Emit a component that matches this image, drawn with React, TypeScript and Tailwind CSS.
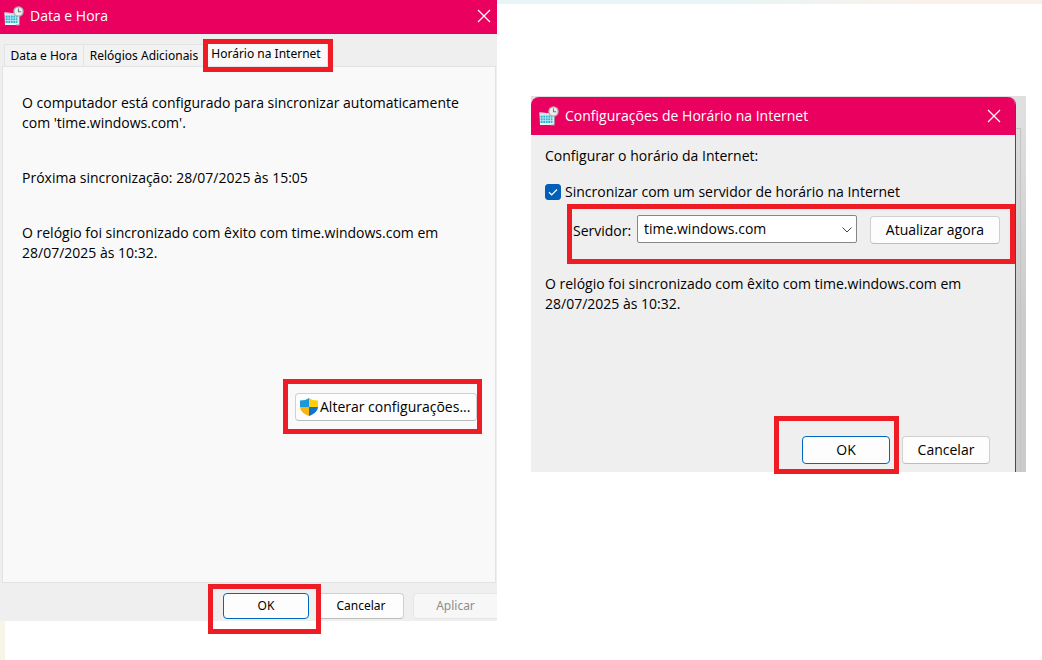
import clsx from 'clsx'

const BUTTON = 'rounded border border-[#d0d0d0] border-b-[#bcbcbc] bg-[#fdfdfd] text-black'
const BUTTON_PRIMARY = 'rounded border border-[#0067c0] bg-[#fdfdfd] text-black'

function CalendarClockIcon() {
  return (
    <svg width="20" height="20" viewBox="0 0 20 20" className="shrink-0" aria-hidden="true">
      <path d="M.5 6.500L15 7.500V19H1z" fill="#eefafd" />
      <path d="M.5 6.500L15 7.500V9L.5 8.500z" fill="#c4dfe8" />
      <path d="M1.500 9.500h12V17h-12z" fill="#2fb4d2" />
      <path d="M4 9v8.500M6.500 9v8.500M9 9v8.500M11.500 9v8.500" stroke="#c9eff6" strokeWidth=".7" />
      <path d="M1 12h13M1 14.500h13" stroke="#c9eff6" strokeWidth=".7" />
      <path d="M15.300 9v10H12" stroke="#a89a9f" strokeWidth="1" fill="none" />
      <circle cx="14.500" cy="5.500" r="4.600" fill="#eceeee" stroke="#a9b0b2" strokeWidth="1.300" />
      <path d="M14.500 2.500v3.300h2.700" stroke="#73787a" strokeWidth="1.100" fill="none" />
    </svg>
  )
}

function CloseIcon() {
  return (
    <svg width="14" height="14" viewBox="0 0 14 14" aria-hidden="true">
      <path d="M1 1l12 12M13 1L1 13" stroke="#fff" strokeWidth="1.200" fill="none" />
    </svg>
  )
}

function ShieldIcon() {
  return (
    <svg width="20" height="20" viewBox="0 0 20 20" className="shrink-0" aria-hidden="true">
      <path d="M10 1C8 2.700 4.800 3.500 1 3.500V10h9z" fill="#1a98dc" />
      <path d="M10 1c2 1.700 5.200 2.500 9 2.500V10h-9z" fill="#ffcf0a" />
      <path d="M1 10h9v9C4.500 16.800 1.300 14 1 10z" fill="#f9b50b" />
      <path d="M19 10h-9v9c5.500-2.200 8.700-5 9-9z" fill="#0c74cc" />
    </svg>
  )
}

// red frame drawn over the control it wraps
function Marker({ className }: { className: string }) {
  return <span className={clsx('pointer-events-none absolute z-10 border-5 border-[#ee1c25]', className)} />
}

function TitleBar({ title, className }: { title: string; className: string }) {
  return (
    <header className={clsx('flex items-center bg-[#ea005e] text-white', className)}>
      <CalendarClockIcon />
      <h2 className="ml-1.5 flex-1 whitespace-nowrap">{title}</h2>
      <button type="button" aria-label="Fechar">
        <CloseIcon />
      </button>
    </header>
  )
}

function DateTimeWindow() {
  return (
    <section className="bg-[#efefef]">
      <TitleBar title="Data e Hora" className="h-[34px] pb-0.5 pl-1 pr-1.5" />

      <div
        role="tablist"
        className="flex h-8 items-end pl-1 font-['Noto_Sans',sans-serif] text-xs whitespace-nowrap"
      >
        <button
          type="button"
          role="tab"
          aria-selected="false"
          className="h-[22px] w-20 border border-b-0 border-[#e3e3e3] bg-[#f2f2f2]"
        >
          Data e Hora
        </button>
        <button
          type="button"
          role="tab"
          aria-selected="false"
          className="h-[22px] w-[120px] border border-x-0 border-b-0 border-[#e3e3e3] bg-[#f2f2f2]"
        >
          Relógios Adicionais
        </button>
        <div className="relative">
          <button
            type="button"
            role="tab"
            aria-selected="true"
            className="h-6 w-[124px] border border-b-0 border-[#e3e3e3] bg-[#f9f9f9] pb-0.5"
          >
            Horário na Internet
          </button>
          <Marker className="-bottom-1.5 -left-px h-[33px] w-[130px]" />
        </div>
      </div>

      <div
        role="tabpanel"
        className="ml-0.5 mr-px flex h-[517px] flex-col items-start border border-[#e3e3e3] bg-[#f9f9f9] pl-[19px] pr-[18px] pt-[26px]"
      >
        <div className="space-y-[35px] whitespace-nowrap">
          <p>
            O computador está configurado para sincronizar automaticamente
            <br />
            com 'time.windows.com'.
          </p>
          <p>Próxima sincronização: 28/07/2025 às 15:05</p>
          <p>
            O relógio foi sincronizado com êxito com time.windows.com em
            <br />
            28/07/2025 às 10:32.
          </p>
        </div>
        <div className="relative mt-[130px] self-end">
          <button
            type="button"
            className={clsx(BUTTON, 'flex h-7 w-[182px] items-center pl-[3px] whitespace-nowrap')}
          >
            <ShieldIcon />
            <span className="ml-px">Alterar configurações...</span>
          </button>
          <Marker className="-left-3 -top-3.5 h-[55px] w-[199px]" />
        </div>
      </div>

      <footer className="flex h-[38px] justify-end gap-[9px] overflow-x-clip pt-2.5 font-['Noto_Sans',sans-serif] text-xs">
        <div className="relative">
          <button type="button" className={clsx(BUTTON_PRIMARY, 'h-[26px] w-[86px]')}>
            OK
          </button>
          <Marker className="-left-[15px] -top-[9px] h-[50px] w-[113px]" />
        </div>
        <button type="button" className={clsx(BUTTON, 'h-[26px] w-[86px]')}>
          Cancelar
        </button>
        <button
          type="button"
          disabled
          className="h-[26px] w-[84px] rounded-l border border-r-0 border-[#e6e6e6] bg-[#f7f7f7] text-[#8d8d8d]"
        >
          Aplicar
        </button>
      </footer>
    </section>
  )
}

function InternetTimeDialog() {
  return (
    <section className="flex bg-linear-to-b from-[#e0e0e0] to-[#cbcbcb] to-60% pt-px">
      <div className="flex-1 overflow-hidden rounded-t-lg border-r border-[#d80058] bg-[#efefef]">
        <TitleBar title="Configurações de Horário na Internet" className="h-[38px] pl-2 pr-3.5" />

        <div className="pl-3.5 pt-[11px]">
          <p>Configurar o horário da Internet:</p>

          <div className="mt-4 flex items-center gap-1">
            <div className="relative size-4">
              <input
                id="sync"
                type="checkbox"
                defaultChecked
                className="peer block size-4 appearance-none rounded-[3px] border border-[#868686] checked:border-[#005fb8] checked:bg-[#005fb8]"
              />
              <svg
                viewBox="0 0 16 16"
                className="pointer-events-none absolute inset-0 hidden peer-checked:block"
                aria-hidden="true"
              >
                <path d="M4 8.200l2.700 2.600L12 5.500" stroke="#fff" strokeWidth="1.200" fill="none" />
              </svg>
            </div>
            <label htmlFor="sync" className="whitespace-nowrap">
              Sincronizar com um servidor de horário na Internet
            </label>
          </div>

          <div className="relative mt-3 flex items-center pl-7 pr-[15px]">
            <label htmlFor="server" className="w-16 pt-1 whitespace-nowrap">
              Servidor:
            </label>
            <div className="relative flex-1">
              <select
                id="server"
                className="block h-7 w-full appearance-none rounded-xs border border-[#868686] bg-white pl-1.5"
              >
                <option>time.windows.com</option>
              </select>
              <svg
                width="10"
                height="6"
                viewBox="0 0 10 6"
                className="pointer-events-none absolute right-[5px] top-3"
                aria-hidden="true"
              >
                <path d="M.5.5L5 5 9.500.5" stroke="#444" strokeWidth="1" fill="none" />
              </svg>
            </div>
            <button type="button" className={clsx(BUTTON, 'ml-[13px] mt-0.5 h-7 w-[130px] whitespace-nowrap')}>
              Atualizar agora
            </button>
            <Marker className="-top-2.5 left-[22px] right-0 h-[60px]" />
          </div>

          <p className="mt-[30px] whitespace-nowrap">
            O relógio foi sincronizado com êxito com time.windows.com em
            <br />
            28/07/2025 às 10:32.
          </p>

          <div className="mt-[122px] flex justify-end gap-3 pb-2 pr-[25px]">
            <button type="button" className={clsx(BUTTON_PRIMARY, 'h-7 w-[88px]')}>
              OK
            </button>
            <button type="button" className={clsx(BUTTON, 'h-7 w-[88px]')}>
              Cancelar
            </button>
          </div>
        </div>
      </div>
      {/* edge of the window behind the dialog */}
      <div className="flex w-2.5 pt-[31px]">
        <div className="w-[5px] border-r border-t border-[#c4c4c4]" />
      </div>
    </section>
  )
}

export default function App() {
  return (
    <main className="grid min-h-screen grid-cols-[497fr_545fr] bg-white font-['Open_Sans','Noto_Sans',sans-serif] text-sm leading-5 text-black">
      <div className="flex flex-col">
        <DateTimeWindow />
        <div className="w-[5px] flex-1 bg-[#f8f4e6]" />
      </div>
      <div>
        <div className="h-1 bg-linear-to-r from-[#e6f6f6] from-40% to-[#faf0ea] to-80%" />
        <div className="relative pl-[34px] pr-4 pt-[92px]">
          <InternetTimeDialog />
          <Marker className="-bottom-0.5 right-[143px] h-[58px] w-[125px]" />
        </div>
      </div>
    </main>
  )
}
